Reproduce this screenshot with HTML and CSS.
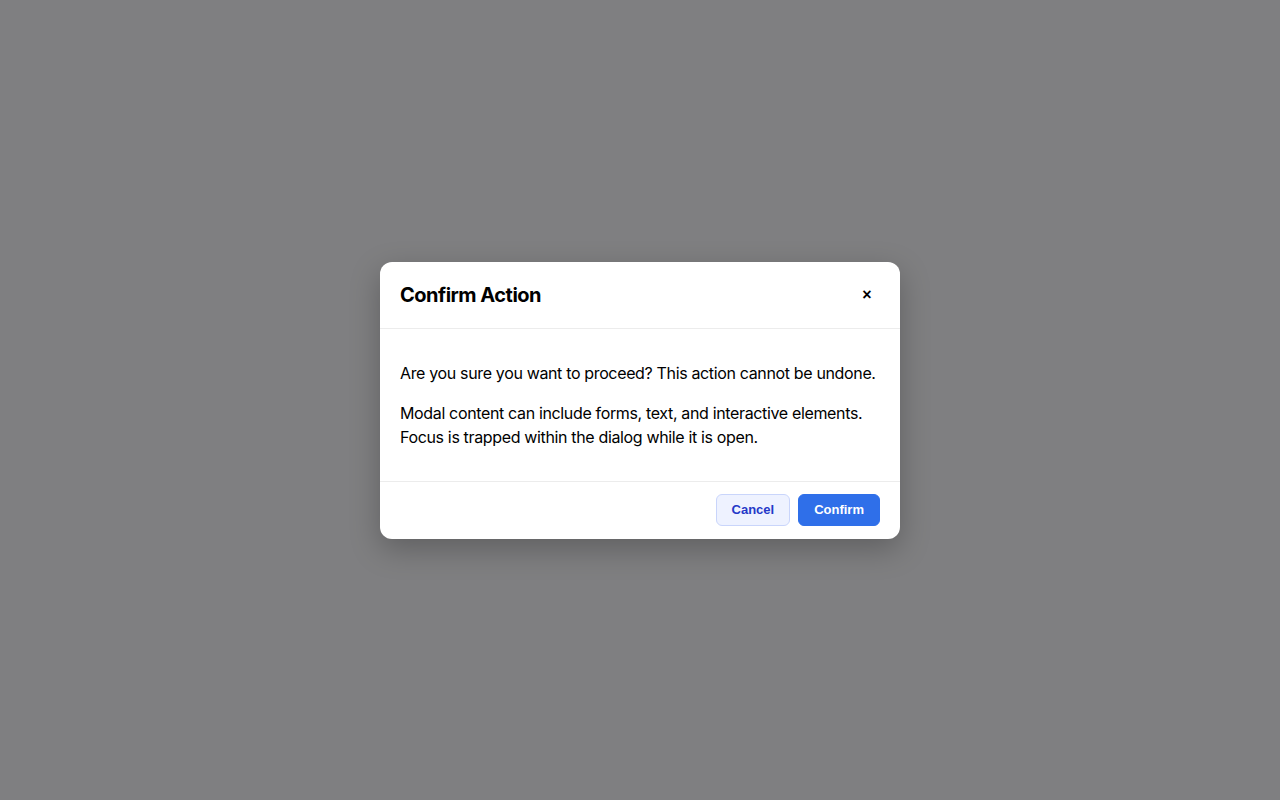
FILE: index.html
```html
<!DOCTYPE html>
<html lang="en">
<head>
<meta charset="utf-8">
<title>Confirm Action</title>
<link rel="stylesheet" href="styles.css">
</head>
<body>
<div class="overlay">
  <div class="modal" role="dialog" aria-modal="true" aria-labelledby="modal-title">
    <header class="modal-header">
      <h2 id="modal-title" class="modal-title">Confirm Action</h2>
      <button class="close-btn" aria-label="Close">×</button>
    </header>
    <div class="modal-body">
      <p>Are you sure you want to proceed? This action cannot be undone.</p>
      <p>Modal content can include forms, text, and interactive elements. Focus is trapped within the dialog while it is open.</p>
    </div>
    <footer class="modal-footer">
      <button class="btn btn-secondary">Cancel</button>
      <button class="btn btn-primary">Confirm</button>
    </footer>
  </div>
</div>
</body>
</html>
```

FILE: styles.css
```css
* { box-sizing: border-box; }
html, body {
  margin: 0;
  padding: 0;
  height: 100%;
}
body {
  font-family: Inter, "Noto Sans", sans-serif;
  background: #7f7f81;
  color: #000;
}
.overlay {
  min-height: 100vh;
  display: flex;
  align-items: center;
  justify-content: center;
}
.modal {
  width: 520px;
  background: #fff;
  border-radius: 12px;
  box-shadow: 0 10px 30px rgba(0, 0, 0, 0.25);
  overflow: hidden;
}
.modal-header {
  display: flex;
  align-items: center;
  justify-content: space-between;
  padding: 20px 20px;
  border-bottom: 1px solid #ececec;
}
.modal-title {
  margin: 0;
  font-size: 20px;
  line-height: 26px;
  font-weight: 700;
  letter-spacing: -0.5px;
}
.close-btn {
  border: none;
  background: transparent;
  font-family: "Liberation Sans", Arial, sans-serif;
  font-size: 16px;
  font-weight: 700;
  line-height: 1;
  width: 26px;
  height: 26px;
  padding: 0;
  color: #000;
  cursor: pointer;
}
.modal-body {
  padding: 16px 20px;
  font-size: 16px;
  line-height: 24px;
  letter-spacing: -0.35px;
}
.modal-body p {
  margin: 16px 0;
}
.modal-footer {
  display: flex;
  justify-content: flex-end;
  gap: 8px;
  padding: 12px 20px 13px;
  border-top: 1px solid #ececec;
}
.btn {
  height: 32px;
  padding: 0 15px;
  border-radius: 6px;
  font-family: "Liberation Sans", Arial, sans-serif;
  font-size: 13px;
  font-weight: 700;
  cursor: pointer;
}
.btn-secondary {
  background: #eef2ff;
  border: 1px solid #c9d5fb;
  color: #2438c8;
}
.btn-primary {
  background: #2f6fe9;
  border: 1px solid #2f6fe9;
  color: #fff;
}
```
